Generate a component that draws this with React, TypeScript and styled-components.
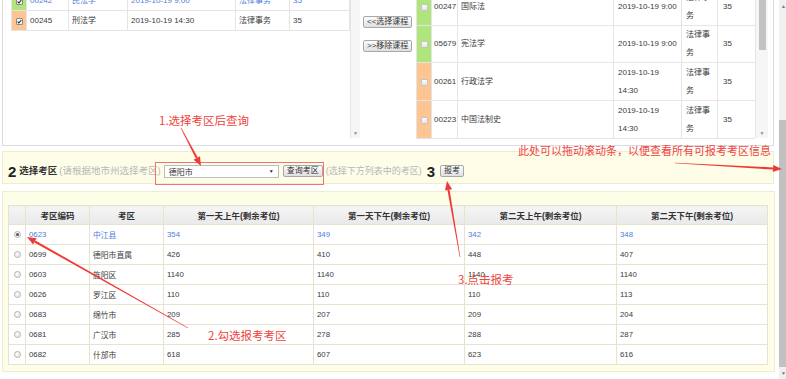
import React from "react";
import styled, { createGlobalStyle } from "styled-components";

const GlobalStyle = createGlobalStyle`
  html, body { margin: 0; padding: 0; background: #ffffff; overflow: hidden; }
  body { font-family: "Liberation Sans", "Noto Sans CJK SC", sans-serif; color: #333333; }
  * { box-sizing: border-box; }
`;

type Tone = "green" | "orange";
const toneColor = (t: Tone) => (t === "green" ? "#b0e57d" : "#fcc591");

const Frame = styled.div`
  position: relative;
  width: 786px;
  height: 379px;
  overflow: hidden;
  display: flex;
  align-items: stretch;
`;

const Main = styled.div`
  width: 773px;
  margin-left: 2px;
  display: flex;
  flex-direction: column;
`;

/* ---------- top panel ---------- */
const TopPanel = styled.div`
  margin-top: -14px;
  margin-right: 1px;
  height: 160px;
  flex: none;
  border: 1px solid #dcdcdc;
  background: #ffffff;
  display: flex;
`;

const ListPane = styled.div<{ $w: number; $top: number; $left: number }>`
  width: ${(p) => p.$w}px;
  flex: none;
  overflow: hidden;
  padding-top: ${(p) => p.$top}px;
  padding-left: ${(p) => p.$left}px;
`;

const FixedTable = styled.table<{ $w: number }>`
  width: ${(p) => p.$w}px;
  table-layout: fixed;
  border-collapse: collapse;
`;

const Col = styled.col<{ $w: number }>`
  width: ${(p) => p.$w}px;
`;

const MarkCell = styled.td<{ $tone: Tone }>`
  background: ${(p) => toneColor(p.$tone)};
  border: 1px solid #e4e4e4;
  padding: 0;
  text-align: center;
  vertical-align: middle;
`;

const LCell = styled.td<{ $blue?: boolean }>`
  height: 20px;
  border: 1px solid #e4e4e4;
  padding: 0 3px;
  font-size: 8px;
  line-height: 18px;
  white-space: nowrap;
  overflow: hidden;
  color: ${(p) => (p.$blue ? "#5080d8" : "#3a3a3a")};
  vertical-align: middle;
`;

const RRow = styled.tr<{ $h: number }>`
  height: ${(p) => p.$h}px;
`;

const RCell = styled.td<{ $pl: number }>`
  border: 1px solid #e6e6e6;
  padding: 0 2px 0 ${(p) => p.$pl}px;
  font-size: 8px;
  line-height: 18px;
  color: #3a3a3a;
  vertical-align: middle;
  overflow: hidden;
`;

const Box = styled.span<{ $checked?: boolean }>`
  display: inline-flex;
  align-items: center;
  justify-content: center;
  width: 7px;
  height: 7px;
  border: 1px solid ${(p) => (p.$checked ? "#8a8a8a" : "#c4c4c4")};
  border-radius: 1px;
  background: ${(p) => (p.$checked ? "#f4f4f4" : "linear-gradient(#fbfbfb, #e6e6e6)")};
  vertical-align: middle;
`;

const ScrollStrip = styled.div<{ $w: number }>`
  width: ${(p) => p.$w}px;
  flex: none;
  margin-bottom: 7px;
  background: #f6f6f6;
  border-left: 1px solid #e6e6e6;
  display: flex;
  flex-direction: column;
  align-items: center;
`;

const StripThumb = styled.div<{ $h: number }>`
  width: 7px;
  height: ${(p) => p.$h}px;
  background: #c3c3c3;
`;

const StripFill = styled.div`
  flex: 1;
`;

const StripArrow = styled.div`
  height: 10px;
  font-size: 5px;
  line-height: 10px;
  color: #8a8a8a;
`;

const BtnCol = styled.div`
  width: 56px;
  flex: none;
  padding: 29px 0 0 3px;
  display: flex;
  flex-direction: column;
  align-items: flex-start;
  gap: 12px;
`;

const GrayButton = styled.span`
  display: inline-block;
  height: 12px;
  padding: 0 3px;
  border: 1px solid #a8a8a8;
  border-radius: 2px;
  background: linear-gradient(#fcfcfc, #e0e0e0);
  font-size: 8px;
  line-height: 10px;
  color: #333;
  white-space: nowrap;
`;

const Filler = styled.div`
  flex: 1;
`;

/* ---------- section 2 bar ---------- */
const StepBar = styled.div`
  margin-top: 5px;
  margin-right: 1px;
  height: 33px;
  flex: none;
  background: #fdfde8;
  border: 1px solid #efedcf;
  display: flex;
  align-items: center;
  padding: 7px 0 0 5px;
  white-space: nowrap;
`;

const StepNum = styled.span<{ $ml?: number }>`
  font-size: 15px;
  font-weight: bold;
  color: #222;
  line-height: 15px;
  margin-left: ${(p) => p.$ml ?? 0}px;
`;

const StepTitle = styled.span`
  font-size: 9.5px;
  font-weight: bold;
  color: #333;
  margin-left: 3px;
  line-height: 12px;
`;

const Hint = styled.span<{ $ml: number; $size: number }>`
  font-size: ${(p) => p.$size}px;
  color: #b8b8b8;
  margin-left: ${(p) => p.$ml}px;
  line-height: 12px;
`;

const SelectBox = styled.span`
  margin-left: 3px;
  width: 115px;
  height: 13px;
  border: 1px solid #bdbdbd;
  background: #fff;
  display: flex;
  align-items: center;
  justify-content: space-between;
  padding: 0 4px 0 4px;
  font-size: 8px;
  color: #333;
`;

const Caret = styled.span`
  font-size: 5px;
  color: #333;
`;

const BarButton = styled(GrayButton)<{ $ml: number }>`
  margin-left: ${(p) => p.$ml}px;
`;

/* ---------- section 3 table ---------- */
const GridPanel = styled.div`
  margin-top: 7px;
  flex: none;
  background: #fdfde8;
  border: 1px solid #efedcf;
  padding: 13px 7px 6px 5px;
`;

const GTable = styled.table`
  width: 759px;
  table-layout: fixed;
  border-collapse: collapse;
  background: #fff;
`;

const GHead = styled.th`
  height: 19px;
  padding: 0;
  border: 1px solid #e6e4cf;
  background: linear-gradient(#f5f5f5, #e9e9e9);
  font-size: 8.5px;
  font-weight: bold;
  color: #333;
  text-align: center;
  white-space: nowrap;
`;

const GCell = styled.td<{ $blue?: boolean; $center?: boolean }>`
  height: 20px;
  padding: ${(p) => (p.$center ? "0" : "0 3px")};
  border: 1px solid #e6e4cf;
  font-size: 7.8px;
  color: ${(p) => (p.$blue ? "#5080d8" : "#3a3a3a")};
  text-align: ${(p) => (p.$center ? "center" : "left")};
  white-space: nowrap;
  vertical-align: middle;
`;

const Radio = styled.span<{ $on?: boolean }>`
  display: inline-flex;
  align-items: center;
  justify-content: center;
  width: 7px;
  height: 7px;
  border-radius: 50%;
  border: 1px solid #b4b4b4;
  background: radial-gradient(circle at 40% 35%, #ffffff, #dcdcdc);
  vertical-align: middle;
  &::after {
    content: "";
    width: 3px;
    height: 3px;
    border-radius: 50%;
    background: ${(p) => (p.$on ? "#555" : "transparent")};
  }
`;

/* ---------- page scrollbar ---------- */
const PageBar = styled.div`
  width: 7px;
  margin-left: 4px;
  flex: none;
  background: #f0f0f0;
  display: flex;
  flex-direction: column;
`;

const PageArrow = styled.div`
  height: 12px;
  font-size: 5px;
  line-height: 12px;
  color: #777;
  text-align: right;
`;

const PageThumb = styled.div`
  margin-top: 108px;
  flex: 1;
  background: #c1c1c1;
`;

/* ---------- annotations ---------- */
const Overlay = styled.div`
  position: absolute;
  inset: 0;
  pointer-events: none;
`;

const Note = styled.span<{ $x: number; $y: number; $size: number }>`
  position: absolute;
  left: ${(p) => p.$x}px;
  top: ${(p) => p.$y}px;
  font-size: ${(p) => p.$size}px;
  line-height: 1;
  color: #f0433d;
  font-family: "Noto Sans CJK SC", sans-serif;
  white-space: nowrap;
`;

const RED = "#ef3b36";

function Arrow({ x1, y1, x2, y2 }: { x1: number; y1: number; x2: number; y2: number }) {
  const dx = x2 - x1;
  const dy = y2 - y1;
  const len = Math.hypot(dx, dy);
  const ux = dx / len;
  const uy = dy / len;
  const px = -uy;
  const py = ux;
  const head = 9;
  const bx = x2 - ux * head;
  const by = y2 - uy * head;
  const t = 0.3;
  const b = 1.1;
  const hw = 3.6;
  const shaft = [
    [x1 + px * t, y1 + py * t],
    [bx + px * b, by + py * b],
    [bx - px * b, by - py * b],
    [x1 - px * t, y1 - py * t],
  ]
    .map((q) => q.join(","))
    .join(" ");
  const tip = `${x2},${y2} ${bx + px * hw},${by + py * hw} ${bx - px * hw},${by - py * hw}`;
  return (
    <g fill={RED}>
      <polygon points={shaft} />
      <polygon points={tip} />
    </g>
  );
}

function Check() {
  return (
    <svg width="5" height="5" viewBox="0 0 5 5">
      <polyline points="0.6,2.6 1.9,3.9 4.4,1" fill="none" stroke="#333" strokeWidth="1.1" />
    </svg>
  );
}

const leftRows = [
  { tone: "green" as Tone, blue: true, code: "00242", name: "民法学", date: "2019-10-19 9:00" },
  { tone: "orange" as Tone, blue: false, code: "00245", name: "刑法学", date: "2019-10-19 14:30" },
];

const rightRows = [
  { tone: "green" as Tone, code: "00247", name: "国际法", date: "2019-10-19 9:00", h: 38 },
  { tone: "green" as Tone, code: "05679", name: "宪法学", date: "2019-10-19 9:00", h: 37 },
  { tone: "orange" as Tone, code: "00261", name: "行政法学", date: "2019-10-19 14:30", h: 38 },
  { tone: "orange" as Tone, code: "00223", name: "中国法制史", date: "2019-10-19 14:30", h: 38 },
];

const areaHeads = ["", "考区编码", "考区", "第一天上午(剩余考位)", "第一天下午(剩余考位)", "第二天上午(剩余考位)", "第二天下午(剩余考位)"];
const areaCols = [17, 64, 74, 150, 151, 152, 151];
const areas = [
  ["0623", "中江县", "354", "349", "342", "348"],
  ["0699", "德阳市直属", "426", "410", "448", "407"],
  ["0603", "旌阳区", "1140", "1140", "1140", "1140"],
  ["0626", "罗江区", "110", "110", "110", "113"],
  ["0683", "绵竹市", "209", "207", "209", "204"],
  ["0681", "广汉市", "285", "278", "288", "287"],
  ["0682", "什邡市", "618", "607", "623", "616"],
];

export default function App() {
  return (
    <Frame>
      <GlobalStyle />
      <Main>
        <TopPanel>
          <ListPane $w={347} $top={3} $left={8}>
            <FixedTable $w={338}>
              <colgroup>
                {[15, 42, 59, 108, 54, 60].map((w, i) => (
                  <Col key={i} $w={w} />
                ))}
              </colgroup>
              <tbody>
                {leftRows.map((r) => (
                  <tr key={r.code}>
                    <MarkCell $tone={r.tone}>
                      <Box $checked>
                        <Check />
                      </Box>
                    </MarkCell>
                    <LCell $blue={r.blue}>{r.code}</LCell>
                    <LCell $blue={r.blue}>{r.name}</LCell>
                    <LCell $blue={r.blue}>{r.date}</LCell>
                    <LCell $blue={r.blue}>法律事务</LCell>
                    <LCell $blue={r.blue}>35</LCell>
                  </tr>
                ))}
              </tbody>
            </FixedTable>
          </ListPane>
          <ScrollStrip $w={10}>
            <StripFill />
            <StripArrow>▼</StripArrow>
          </ScrollStrip>
          <BtnCol>
            <GrayButton>&lt;&lt;选择课程</GrayButton>
            <GrayButton>&gt;&gt;移除课程</GrayButton>
          </BtnCol>
          <ListPane $w={339} $top={0} $left={0}>
            <FixedTable $w={339}>
              <colgroup>
                {[15, 26, 156, 68, 36, 38].map((w, i) => (
                  <Col key={i} $w={w} />
                ))}
              </colgroup>
              <tbody>
                {rightRows.map((r) => (
                  <RRow key={r.code} $h={r.h}>
                    <MarkCell $tone={r.tone}>
                      <Box />
                    </MarkCell>
                    <RCell $pl={2}>{r.code}</RCell>
                    <RCell $pl={3}>{r.name}</RCell>
                    <RCell $pl={4}>{r.date}</RCell>
                    <RCell $pl={4}>法律事务</RCell>
                    <RCell $pl={5}>35</RCell>
                  </RRow>
                ))}
              </tbody>
            </FixedTable>
          </ListPane>
          <ScrollStrip $w={13}>
            <StripThumb $h={63} />
            <StripFill />
            <StripArrow>▼</StripArrow>
          </ScrollStrip>
          <Filler />
        </TopPanel>

        <StepBar>
          <StepNum>2</StepNum>
          <StepTitle>选择考区</StepTitle>
          <Hint $ml={2} $size={9.5}>(请根据地市州选择考区)</Hint>
          <SelectBox>
            <span>德阳市</span>
            <Caret>▼</Caret>
          </SelectBox>
          <BarButton $ml={4}>查询考区</BarButton>
          <Hint $ml={3} $size={9}>(选择下方列表中的考区)</Hint>
          <StepNum $ml={5}>3</StepNum>
          <BarButton $ml={5}>报考</BarButton>
        </StepBar>

        <GridPanel>
          <GTable>
            <colgroup>
              {areaCols.map((w, i) => (
                <Col key={i} $w={w} />
              ))}
            </colgroup>
            <thead>
              <tr>
                {areaHeads.map((h, i) => (
                  <GHead key={i}>{h}</GHead>
                ))}
              </tr>
            </thead>
            <tbody>
              {areas.map((row, ri) => (
                <tr key={row[0]}>
                  <GCell $center>
                    <Radio $on={ri === 0} />
                  </GCell>
                  {row.map((v, ci) => (
                    <GCell key={ci} $blue={ri === 0}>
                      {v}
                    </GCell>
                  ))}
                </tr>
              ))}
            </tbody>
          </GTable>
        </GridPanel>
      </Main>

      <PageBar>
        <PageArrow>▲</PageArrow>
        <PageThumb />
        <PageArrow>▼</PageArrow>
      </PageBar>

      <Overlay>
        <svg width="786" height="379" viewBox="0 0 786 379">
          <rect x="155.5" y="162.5" width="168" height="22" fill="none" stroke="#f07272" strokeWidth="1" />
          <Arrow x1={181} y1={128} x2={201} y2={166} />
          <Arrow x1={188} y1={328} x2={27} y2={237} />
          <Arrow x1={460} y1={257} x2={447} y2={181} />
          <Arrow x1={675} y1={163} x2={782} y2={169} />
        </svg>
        <Note $x={159} $y={115} $size={11.5}>1.选择考区后查询</Note>
        <Note $x={518} $y={145} $size={11}>此处可以拖动滚动条，以便查看所有可报考考区信息</Note>
        <Note $x={208} $y={330} $size={11.5}>2.勾选报考考区</Note>
        <Note $x={458} $y={274} $size={11.5}>3.点击报考</Note>
      </Overlay>
    </Frame>
  );
}
